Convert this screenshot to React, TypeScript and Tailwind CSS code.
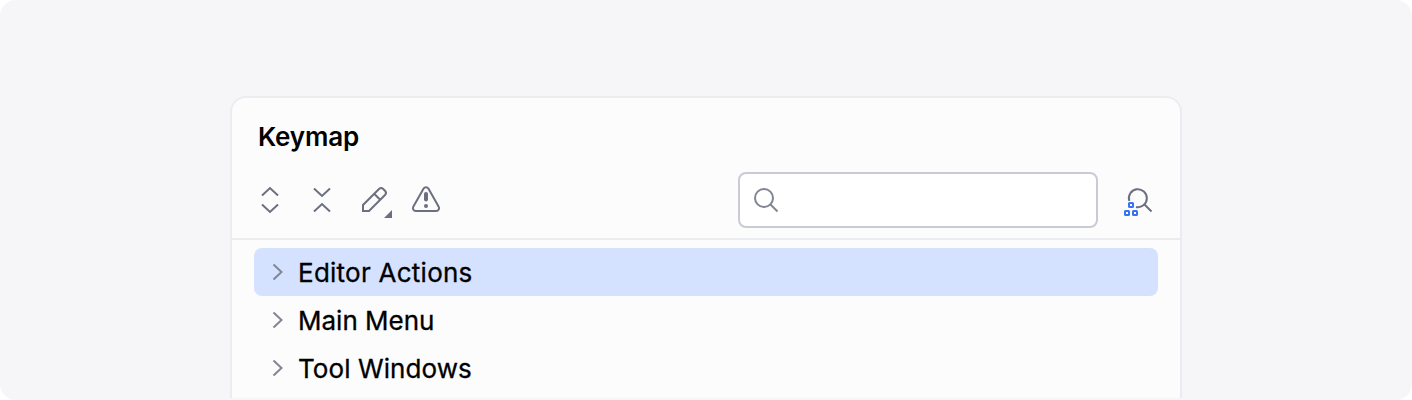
import type { ReactNode } from "react";

function Icon({ children }: { children: ReactNode }) {
  return (
    <svg
      className="size-8 shrink-0 overflow-visible text-[#6c707e]"
      viewBox="0 0 32 32"
      fill="none"
      stroke="currentColor"
      strokeWidth="2"
    >
      {children}
    </svg>
  );
}

const rows = [
  { label: "Editor Actions", tracking: "tracking-[0.25px]" },
  { label: "Main Menu", tracking: "tracking-[0px]" },
  { label: "Tool Windows", tracking: "tracking-[0.08px]" },
];

export default function App() {
  return (
    <div className="h-[400px] w-[1412px] bg-white font-['Inter',sans-serif] text-black">
      <div className="flex h-full justify-center overflow-hidden rounded-2xl bg-[#f6f6f9] pt-24 pb-0.5">
        <section className="flex w-[952px] flex-col rounded-t-2xl border-2 border-b-0 border-[#ebecf0] bg-[#fcfcfd]">
          <header className="flex h-[142px] shrink-0 flex-col border-b-2 border-[#ebecf0] pt-[23px]">
            <h1 className="h-[51px] pl-[26px] text-[26px] leading-8 font-semibold tracking-[-0.15px]">Keymap</h1>
            <div className="flex h-14 items-center pr-[26px] pl-[22px]">
              <div className="flex gap-5">
                <Icon>
                  <path d="M8 11.5 16 4l8 7.5M8 20.5l8 7.5 8-7.5" />
                </Icon>
                <Icon>
                  <path d="M8 4.5l8 7.5 8-7.5M8 27.5 16 20l8 7.5" />
                </Icon>
                <Icon>
                  <path d="M5 27v-6L21 5a3 3 0 0 1 4.2 0l1.8 1.8a3 3 0 0 1 0 4.2L11 27ZM16.2 9.8l6 6" />
                  <path d="M34 26v8h-8Z" fill="currentColor" stroke="none" />
                </Icon>
                <Icon>
                  <path d="M13.6 4.6a2.8 2.8 0 0 1 4.8 0l10.3 18.2a2.8 2.8 0 0 1-2.4 4.2H5.7a2.8 2.8 0 0 1-2.4-4.2Z" />
                  <path d="M16 10v5.5" strokeWidth="4" strokeLinecap="round" />
                  <circle cx="16" cy="22" r="2" fill="currentColor" stroke="none" />
                </Icon>
              </div>
              <label className="ml-auto flex h-14 w-[360px] items-center rounded-lg border-2 border-[#c9ccd6] bg-white pl-2.5">
                <svg className="size-8" viewBox="0 0 32 32" fill="none" stroke="#818594" strokeWidth="2">
                  <circle cx="14" cy="14" r="9" />
                  <path d="m20.5 20.5 7 7" />
                </svg>
                <input aria-label="Search" className="h-full flex-1 bg-transparent outline-none" />
              </label>
              <div className="ml-6 flex">
                <Icon>
                  <path d="M7.3 17A9 9 0 1 1 14 23M22.5 20.5l7 7" />
                  <g stroke="#3574f0">
                    <rect x="7" y="19" width="4" height="4" rx="0.5" />
                    <rect x="3" y="27" width="4" height="4" rx="0.5" />
                    <rect x="11" y="27" width="4" height="4" rx="0.5" />
                  </g>
                </Icon>
              </div>
            </div>
          </header>
          <ul className="px-[22px] pt-2">
            {rows.map(({ label, tracking }, index) => (
              <li
                key={label}
                className={`flex h-12 items-center rounded-lg pl-4 text-[26px] [-webkit-text-stroke:0.3px_black] ${index === 0 ? "bg-[#d4e2ff]" : ""}`}
              >
                <svg className="mr-3 h-5 w-4" viewBox="0 0 16 20" fill="none" stroke="#818594" strokeWidth="2">
                  <path d="m3.5 2.5 8 7.5-8 7.5" />
                </svg>
                <span className={tracking}>{label}</span>
              </li>
            ))}
          </ul>
        </section>
      </div>
    </div>
  );
}
